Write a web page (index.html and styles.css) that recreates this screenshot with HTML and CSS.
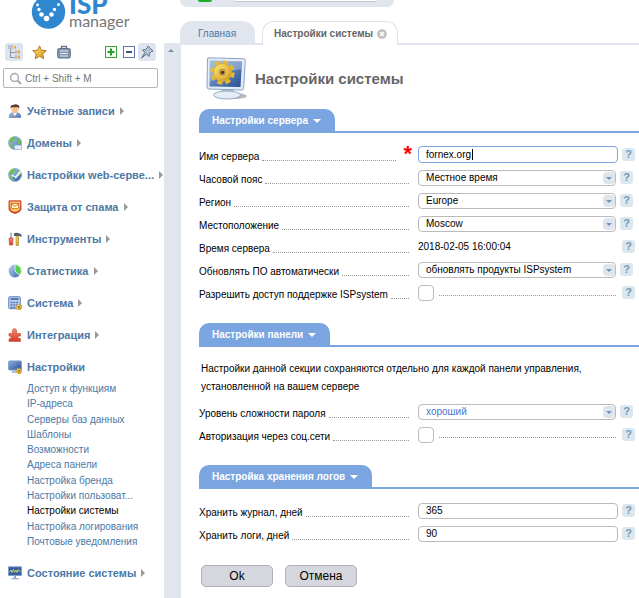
FILE: index.html
```
<!DOCTYPE html>
<html lang="ru">
<head>
  <meta charset="utf-8">
  <meta name="viewport" content="width=device-width, initial-scale=1.0">
  <title>ISPmanager</title>
  <link rel="stylesheet" href="styles.css">
</head>
<body>
  <!-- shared gradients and repeated shapes -->
  <svg class="defs" width="0" height="0" aria-hidden="true">
    <defs>
      <linearGradient id="blue" x1="0" y1="0" x2="1" y2="1">
        <stop offset="0" stop-color="#b9d3f3"/><stop offset="1" stop-color="#3d68b0"/>
      </linearGradient>
      <linearGradient id="screen" x1="0" y1="0" x2="1" y2="1">
        <stop offset="0" stop-color="#8db0dc"/><stop offset="1" stop-color="#284e92"/>
      </linearGradient>
      <linearGradient id="gold" x1="0" y1="0" x2="1" y2="1">
        <stop offset="0" stop-color="#fdec6a"/><stop offset="1" stop-color="#d08e1a"/>
      </linearGradient>
      <linearGradient id="red" x1="0" y1="0" x2="0" y2="1">
        <stop offset="0" stop-color="#f58e72"/><stop offset="1" stop-color="#d23a26"/>
      </linearGradient>
      <g id="globe">
        <circle cx="7" cy="7" r="6.5" fill="url(#blue)" stroke="#6a94c8" stroke-width=".6"/>
        <path d="M2 3Q5 0 8 1L7 3 5 4 5 6 3 7 1 6ZM9 2Q13 3 13 7L11 9 9 7 10 5ZM3 8L6 9 6 13Q3 12 2 9Z" fill="#6cc04e"/>
      </g>
      <g id="cog">
        <circle cx="11" cy="11" r="2.6" fill="url(#gold)" stroke="#c99a36" stroke-width="1.4" stroke-dasharray="1.2 .8"/>
        <circle cx="11" cy="11" r="1" fill="#8d713a"/>
      </g>
    </defs>
  </svg>

  <div class="app">
    <aside class="sidebar">
      <a class="logo" href="#" aria-label="ISPmanager">
        <svg width="140" height="34" viewBox="0 0 140 34">
          <circle cx="48.500" cy="12" r="16.700" fill="#2f87d0"/>
          <g fill="#fff">
            <circle cx="37.500" cy="5" r="1.400"/><circle cx="39" cy="9.500" r="1.700"/><circle cx="41.500" cy="14.500" r="2.300"/>
            <circle cx="46.500" cy="18.500" r="2.800"/><circle cx="51.500" cy="14.500" r="2.300"/><circle cx="54.500" cy="9.500" r="1.700"/><circle cx="58.500" cy="4.500" r="1.500"/>
          </g>
          <text class="logo-isp" x="69" y="14">ISP</text>
          <text class="logo-manager" x="69" y="27">manager</text>
        </svg>
      </a>

      <div class="toolbar">
        <button class="tool active" aria-label="Дерево">
          <svg width="14" height="14" viewBox="0 0 14 14"><path d="M3.500 4V12.500H8M3.500 7.500H8" stroke="#8795a5" fill="none"/><path d="M1 1H6M1 3H6M8 6H10M8 8H10M8 11H10M8 13H10" stroke="#9aa4ae"/><path d="M7 1H9V3.500H7ZM10.500 5.500H13V8.500H10.500ZM10.500 10.500H13V13.500H10.500Z" fill="#f3a72e"/></svg>
        </button>
        <button class="tool" aria-label="Избранное">
          <svg width="15" height="15" viewBox="0 0 14 14"><path d="M7 .8L8.900 4.900 13.300 5.300 10 8.300 11 12.800 7 10.500 3 12.800 4 8.300.7 5.300 5.100 4.900Z" fill="url(#gold)" stroke="#b5752c" stroke-width=".9"/></svg>
        </button>
        <button class="tool" aria-label="История">
          <svg width="14" height="14" viewBox="0 0 14 14"><path d="M4.500 3.500V1.500H9.500V3.500" fill="none" stroke="#66788f" stroke-width="1.300"/><rect x=".7" y="3.500" width="12.600" height="9.500" rx="1.500" fill="#8193aa" stroke="#5f7189"/><path d="M3 6H11M3 8.500H11M3 11H11" stroke="#e5ebf2"/></svg>
        </button>
        <span class="spacer"></span>
        <button class="tool" aria-label="Развернуть">
          <svg width="12" height="12" viewBox="0 0 12 12"><rect x=".5" y=".5" width="11" height="11" fill="#f2fff0" stroke="#36a53e"/><path d="M6 2.500V9.500M2.500 6H9.500" stroke="#2a9a31" stroke-width="2"/></svg>
        </button>
        <button class="tool" aria-label="Свернуть">
          <svg width="12" height="12" viewBox="0 0 12 12"><rect x=".5" y=".5" width="11" height="11" fill="#fff" stroke="#5f73a6"/><path d="M3 6H9" stroke="#3d528b" stroke-width="2"/></svg>
        </button>
        <button class="tool active" aria-label="Закрепить">
          <svg width="14" height="14" viewBox="0 0 14 14"><path d="M8 1L13 6 11.500 6.500 9.500 8.500 9 11.500 6.500 9 1.500 13 5 7.500 2.500 5 5.500 4.500 7.500 2.500Z" fill="#b3c2d2" stroke="#5d7288"/></svg>
        </button>
      </div>

      <div class="search">
        <svg width="13" height="13" viewBox="0 0 13 13"><circle cx="5.500" cy="5.500" r="4" fill="none" stroke="#aaa" stroke-width="1.400"/><path d="M8.500 8.500L12 12" stroke="#aaa" stroke-width="2"/></svg>
        <input type="text" placeholder="Ctrl + Shift + M" aria-label="Поиск">
      </div>

      <nav class="menu">
        <a class="menu-item arrow" href="#">
          <svg class="icon" viewBox="0 0 14 14"><path d="M1 13.500Q1 9 5 8.500H9Q13 9 13 13.500Z" fill="url(#blue)" stroke="#5c84bc" stroke-width=".6"/><path d="M5 8.500L7 13 9 8.500Z" fill="#fff"/><path d="M7 10L6.300 13.500H7.700Z" fill="#d65140"/><path d="M3.500 3Q7 1 10.500 3V6Q10 9 7 9.300 4 9 3.500 6Z" fill="#f6c08d"/><path d="M2.800 4.500Q2 .5 5 1 8-.5 10 1 12 1.500 11 4.500L9.800 3Q7 3.500 4.200 3Z" fill="#5d3d30"/></svg>
          Учётные записи
        </a>
        <a class="menu-item arrow" href="#">
          <svg class="icon" viewBox="0 0 14 14"><use href="#globe"/><rect x="6.500" y="9" width="7.200" height="4.700" rx="1" fill="#e3effd" stroke="#84a9d6" stroke-width=".8"/></svg>
          Домены
        </a>
        <a class="menu-item arrow" href="#">
          <svg class="icon" viewBox="0 0 14 14"><use href="#globe"/><path d="M4 7L7 10 12.500 3.500" fill="none" stroke="#e9f1fa" stroke-width="2"/><path d="M5 9L8 12 13 7" fill="none" stroke="#3972b6" stroke-width="1.400"/></svg>
          Настройки web-серве...
        </a>
        <a class="menu-item arrow" href="#">
          <svg class="icon" viewBox="0 0 14 14"><path d="M1 .8H13V9.500Q12.500 12 7 13.500 1.500 12 1 9.500Z" fill="url(#red)" stroke="#b93622" stroke-width=".8"/><path d="M2.300 2H11.700V9Q11 11 7 12 3 11 2.300 9Z" fill="#fbcf54"/><rect x="3.500" y="3.500" width="7" height="5" fill="#fff5c4" stroke="#d05b2f" stroke-width=".7"/><path d="M3.500 3.700L7 6.500 10.500 3.700" fill="none" stroke="#d05b2f" stroke-width=".8"/></svg>
          Защита от спама
        </a>
        <a class="menu-item arrow" href="#">
          <svg class="icon" viewBox="0 0 14 14"><path d="M3 .8V6" stroke="#9aa7b5" stroke-width="1.600"/><path d="M1 6H5L4.700 13H1.500Z" fill="url(#red)" stroke="#bd3e2b" stroke-width=".6"/><path d="M6 1.200Q10 0 13.500 2.500V5L11.500 4H6Z" fill="#53616f"/><path d="M8 4.200H10.500V13.500H8Z" fill="url(#gold)" stroke="#96772b" stroke-width=".5"/></svg>
          Инструменты
        </a>
        <a class="menu-item arrow" href="#">
          <svg class="icon" viewBox="0 0 14 14"><circle cx="7" cy="7" r="6.400" fill="url(#blue)"/><path d="M7 7V.5A6.500 6.500 0 0 1 11.500 11.500Z" fill="#55cf47" stroke="#eaffea" stroke-width=".8"/></svg>
          Статистика
        </a>
        <a class="menu-item arrow" href="#">
          <svg class="icon" viewBox="0 0 14 14"><rect x=".7" y=".7" width="11.600" height="12" rx="1" fill="#bdd0ee" stroke="#6788bd"/><path d="M2.500 3H10.500" stroke="#5775ae" stroke-width="2"/><path d="M2.500 6.500H10.500M2.500 9H9M2.500 11.500H8" stroke="#5775ae" stroke-width="1.500" stroke-dasharray="2 .8"/><use href="#cog"/></svg>
          Система
        </a>
        <a class="menu-item arrow" href="#">
          <svg class="icon" viewBox="0 0 14 14"><path d="M1 5.500H5.200Q4 4.500 4.200 3 4.700.6 6.500.6T8.800 3Q9 4.500 8 5.500H12.500V8Q10 7.800 10 9.300T12.500 10.700V13.400H1V11Q3 10.700 3 9.300T1 8Z" fill="url(#red)" stroke="#cb4430" stroke-width=".6"/></svg>
          Интеграция
        </a>
        <a class="menu-item" href="#">
          <svg class="icon" viewBox="0 0 14 14"><rect x=".7" y="1" width="12.600" height="9" rx="1" fill="url(#screen)" stroke="#7094c6"/><path d="M5 10H9L10 13H3Z" fill="#a9bfdc"/><use href="#cog"/></svg>
          Настройки
        </a>
        <ul class="submenu">
          <li><a href="#">Доступ к функциям</a></li>
          <li><a href="#">IP-адреса</a></li>
          <li><a href="#">Серверы баз данных</a></li>
          <li><a href="#">Шаблоны</a></li>
          <li><a href="#">Возможности</a></li>
          <li><a href="#">Адреса панели</a></li>
          <li><a href="#">Настройка бренда</a></li>
          <li><a href="#">Настройки пользоват...</a></li>
          <li><a class="current" href="#">Настройки системы</a></li>
          <li><a href="#">Настройка логирования</a></li>
          <li><a href="#">Почтовые уведомления</a></li>
        </ul>
        <a class="menu-item arrow" href="#">
          <svg class="icon" viewBox="0 0 14 14"><rect x=".5" y=".8" width="13" height="8.700" fill="#365e9f" stroke="#7d9bc8" stroke-width=".8"/><path d="M1.500 6L3 4 4 6.500 5.500 3.500 6.500 6.500 8 4 9 6.500 10.500 3.500 12.500 6" fill="none" stroke="#c6da75" stroke-width=".9"/><path d="M6 10H8V12H10.500V13.300H3.500V12H6Z" fill="#91a8cc"/></svg>
          Состояние системы
        </a>
      </nav>
    </aside>

    <div class="scroll-strip"></div>

    <main class="main">
      <div class="topbar">
        <span class="topbar-dot"></span>
        <span class="topbar-field"></span>
      </div>

      <div class="tabs">
        <a class="tab" href="#">Главная</a>
        <div class="tab tab-active">
          Настройки системы
          <button class="tab-close" aria-label="Закрыть">
            <svg width="10" height="10" viewBox="0 0 10 10"><circle cx="5" cy="5" r="4.800" fill="#bdbdbd"/><path d="M3 3L7 7M7 3L3 7" stroke="#fff" stroke-width="1.500"/></svg>
          </button>
        </div>
      </div>

      <div class="content">
        <div class="page-title">
          <svg width="42" height="44" viewBox="0 0 42 44">
            <ellipse cx="29" cy="39" rx="12" ry="3" fill="#8a8a8a" opacity=".6"/>
            <path d="M16 31H27L28 37H15Z" fill="#a9bbd2"/>
            <ellipse cx="21" cy="38" rx="13.500" ry="4" fill="#e4ecf6" stroke="#97abc5"/>
            <path d="M1.500 2Q1.500 .8 3 .8L38 1.800Q39.500 2 39.300 3.500L37.500 31.500Q37.300 33 36 33L3 32Q1 32 1 30Z" fill="#e4edf7" stroke="#8aa2c4"/>
            <path d="M3.800 3.500L36 4.500 34.500 30 3.500 29.500Z" fill="url(#screen)"/>
            <path d="M3.800 3.500L36 4.500 35.500 12Q17 14 3.500 25Z" fill="#c8daf0" opacity=".4"/>
            <circle cx="16.500" cy="15.500" r="10" fill="none" stroke="#e3bb34" stroke-width="4.500" stroke-dasharray="4.854 3"/>
            <circle cx="16.500" cy="15.500" r="9" fill="url(#gold)" stroke="#d7a52c" stroke-width=".7"/>
            <circle cx="16.500" cy="15.500" r="4.500" fill="#c69b3a" stroke="#f7df78"/>
            <circle cx="16.500" cy="15.500" r="1.700" fill="#4f3520"/>
          </svg>
          <h1>Настройки системы</h1>
        </div>

        <form class="form">
          <section class="section">
            <div class="section-head"><button type="button" class="section-tab">Настройки сервера</button></div>
            <div class="row">
              <label class="label required" for="host">Имя сервера</label>
              <input class="field focused" id="host" type="text" value="fornex.org">
              <button type="button" class="help">?</button>
            </div>
            <div class="row row-select">
              <label class="label" for="tz">Часовой пояс</label>
              <div class="select"><select class="field" id="tz"><option>Местное время</option></select></div>
              <button type="button" class="help">?</button>
            </div>
            <div class="row row-select">
              <label class="label" for="region">Регион</label>
              <div class="select"><select class="field" id="region"><option>Europe</option></select></div>
              <button type="button" class="help">?</button>
            </div>
            <div class="row row-select">
              <label class="label" for="place">Местоположение</label>
              <div class="select"><select class="field" id="place"><option>Moscow</option></select></div>
              <button type="button" class="help">?</button>
            </div>
            <div class="row">
              <span class="label">Время сервера</span>
              <span class="value">2018-02-05 16:00:04</span>
              <button type="button" class="help">?</button>
            </div>
            <div class="row row-select">
              <label class="label" for="update">Обновлять ПО автоматически</label>
              <div class="select"><select class="field" id="update"><option>обновлять продукты ISPsystem</option></select></div>
              <button type="button" class="help">?</button>
            </div>
            <div class="row">
              <label class="label" for="support">Разрешить доступ поддержке ISPsystem</label>
              <div class="check"><input type="checkbox" id="support"></div>
              <button type="button" class="help">?</button>
            </div>
          </section>

          <section class="section">
            <div class="section-head"><button type="button" class="section-tab">Настройки панели</button></div>
            <p class="note">Настройки данной секции сохраняются отдельно для каждой панели управления, установленной на вашем сервере</p>
            <div class="row row-select">
              <label class="label" for="strength">Уровень сложности пароля</label>
              <div class="select"><select class="field changed" id="strength"><option>хороший</option></select></div>
              <button type="button" class="help">?</button>
            </div>
            <div class="row">
              <label class="label" for="social">Авторизация через соц.сети</label>
              <div class="check"><input type="checkbox" id="social"></div>
              <button type="button" class="help">?</button>
            </div>
          </section>

          <section class="section">
            <div class="section-head"><button type="button" class="section-tab">Настройка хранения логов</button></div>
            <div class="row">
              <label class="label" for="journal">Хранить журнал, дней</label>
              <input class="field" id="journal" type="text" value="365">
              <button type="button" class="help">?</button>
            </div>
            <div class="row">
              <label class="label" for="logs">Хранить логи, дней</label>
              <input class="field" id="logs" type="text" value="90">
              <button type="button" class="help">?</button>
            </div>
          </section>

          <div class="buttons">
            <button type="button" class="btn">Ok</button>
            <button type="button" class="btn">Отмена</button>
          </div>
        </form>
      </div>
    </main>
  </div>
</body>
</html>
```

FILE: styles.css
```
* {
  box-sizing: border-box;
}
body {
  margin: 0;
  font-family: "Liberation Sans", Arial, sans-serif;
  font-size: 10px;
  color: #000;
  background: #fff;
}
button, input, select {
  font-family: inherit;
  font-size: inherit;
  margin: 0;
}
button {
  border: none;
  padding: 0;
  background: none;
  cursor: pointer;
}
a {
  color: #4c78a5;
  text-decoration: none;
}
.defs {
  position: absolute;
}
.app {
  display: flex;
  min-height: 100vh;
}

/* Sidebar */
.sidebar {
  flex: 0 0 164px;
  width: 164px;
}
.logo {
  display: block;
  height: 42px;
}
.logo svg {
  display: block;
}
.logo-isp {
  font-family: Lato, sans-serif;
  font-weight: 900;
  font-size: 26px;
  fill: #2f87d0;
}
.logo-manager {
  font-family: Lato, sans-serif;
  font-size: 16px;
  fill: #777;
}
.toolbar {
  display: flex;
  align-items: center;
  gap: 7px;
  height: 20px;
  padding: 0 8px 0 5px;
}
.tool {
  display: flex;
  align-items: center;
  justify-content: center;
  height: 18px;
  min-width: 18px;
  border-radius: 3px;
}
.tool.active {
  background: #dde4ee;
}
.spacer {
  flex: 1;
}
.toolbar .spacer ~ .tool {
  margin-left: -7px;
}
.search {
  display: flex;
  align-items: center;
  gap: 3px;
  height: 20px;
  margin: 6px 6px 7px 3px;
  padding: 0 5px;
  border: 1px solid #b5b5b5;
  border-radius: 2px;
}
.search svg {
  flex: none;
}
.search input {
  flex: 1;
  min-width: 0;
  padding: 0;
  border: none;
  outline: none;
  background: none;
}
.search input::placeholder {
  color: #757575;
}
.menu {
  padding-left: 8px;
}
.menu-item {
  display: flex;
  align-items: center;
  height: 32px;
  font-size: 11px;
  font-weight: bold;
  white-space: nowrap;
}
.icon {
  flex: none;
  width: 14px;
  height: 14px;
  margin-right: 5px;
}
.arrow::after {
  content: "";
  flex: none;
  margin-left: 5px;
  border: 4px solid transparent;
  border-left-color: #999;
  border-right: none;
}
.submenu {
  display: flex;
  flex-direction: column;
  justify-content: space-between;
  min-height: 168px;
  margin: -2px 0 8px;
  padding: 0 0 0 19px;
  list-style: none;
}
.submenu li {
  line-height: 15px;
}
.submenu .current {
  color: #000;
}
.scroll-strip {
  flex: 0 0 16px;
  margin-top: 43px;
  padding: 6px 4px;
  background: #e0e5ee;
}
.scroll-strip::before {
  content: "";
  display: block;
  width: 0;
  border: 3px solid transparent;
  border-bottom-color: #7d8fa8;
  border-top: none;
}

/* Main area */
.main {
  flex: 1;
  min-width: 0;
}
.topbar {
  display: flex;
  width: 214px;
  height: 7px;
  margin-bottom: 14px;
  padding: 0 18px;
  gap: 23px;
  background: #e0e5ee;
  border-radius: 0 0 14px 14px;
}
.topbar-dot {
  width: 14px;
  height: 2px;
  background: #1fae26;
  border-radius: 0 0 7px 7px;
}
.topbar-field {
  flex: 1;
  height: 2px;
  background: #fff;
  border-bottom: 1px solid #c2c6cc;
}
.tabs {
  display: flex;
  gap: 7px;
}
.tab {
  display: flex;
  align-items: center;
  gap: 4px;
  height: 24px;
  padding: 0 19px 0 18px;
  background: #e0e5ee;
  border-radius: 12px 12px 0 0;
}
.tab-active {
  position: relative;
  padding: 0 10px 0 11px;
  color: #666;
  font-weight: bold;
  background: #fff;
  border: 1px solid #dbe2ec;
  border-bottom: none;
}
.tab-close {
  display: flex;
}
.content {
  margin-top: -2px;
  padding: 1px 4px 11px 18px;
  border-top: 2px solid #e0e5ee;
  border-left: 1px solid #e0e5ee;
}
.page-title {
  display: flex;
  align-items: center;
  gap: 7px;
  padding: 11px 0 8px 7px;
}
.page-title h1 {
  margin: 0;
  font-size: 15px;
  line-height: 18px;
  color: #666;
}
.section {
  margin-bottom: 19px;
}
.section-head {
  display: flex;
  margin: 0 -4px 10px 0;
  border-bottom: 2px solid #7aa5e0;
}
.section-tab {
  display: flex;
  align-items: center;
  gap: 5px;
  height: 22px;
  padding: 0 14px 0 13px;
  color: #fff;
  font-weight: bold;
  background: #7aa5e0;
  border-radius: 10px 10px 0 0;
}
.section-tab::after {
  content: "";
  margin-top: 2px;
  border: 4px solid transparent;
  border-top-color: #fff;
  border-bottom: none;
}
.note {
  margin: 13px 30px 4px 2px;
  line-height: 18px;
}
.row {
  display: flex;
  align-items: center;
  gap: 4px;
  height: 23px;
}
.row-select {
  padding-right: 2px;
}
.label {
  display: flex;
  align-items: center;
  flex: 0 0 210px;
  margin-right: 5px;
  padding-top: 4px;
  line-height: 13px;
  white-space: nowrap;
}
.label::after {
  content: "";
  flex: 1;
  height: 8px;
  margin-left: 3px;
  border-bottom: 1px dotted #999;
}
.required {
  position: relative;
  padding-right: 13px;
}
.required::before {
  content: "*";
  position: absolute;
  right: -3px;
  top: -3px;
  font-size: 22px;
  font-weight: bold;
  line-height: 22px;
  color: #f00;
}
.field {
  flex: 1;
  min-width: 0;
  width: 100%;
  height: 16px;
  padding: 0 7px 1px;
  color: #000;
  border: 1px solid #bbb;
  border-radius: 4px;
  background: #fff;
  outline: none;
}
/* focused text box with its cursor after the value */
.focused {
  height: 17px;
  border-color: #7aa5e0;
  background: linear-gradient(#000, #000) 53px 2px / 1px 11px no-repeat;
}
.select {
  position: relative;
  display: flex;
  flex: 1;
}
select.field {
  appearance: none;
}
.select::before {
  content: "";
  position: absolute;
  right: 1px;
  top: 2px;
  width: 12px;
  height: 12px;
  border-radius: 4px;
  background: #dfe5ec;
  pointer-events: none;
}
.select::after {
  content: "";
  position: absolute;
  right: 4px;
  top: 7px;
  border: 3px solid transparent;
  border-top-color: #7593b5;
  border-bottom: none;
  pointer-events: none;
}
.field.changed {
  color: #4577cc;
}
.value {
  flex: 1;
}
.check {
  display: flex;
  align-items: center;
  flex: 1;
  gap: 5px;
}
.check input {
  appearance: none;
  width: 16px;
  height: 16px;
  border: 1px solid #bbb;
  border-radius: 4px;
  background: #fff;
}
.check::after {
  content: "";
  flex: 1;
  height: 6px;
  margin-right: 2px;
  border-bottom: 1px dotted #999;
}
.help {
  flex: none;
  width: 13px;
  height: 13px;
  line-height: 13px;
  font-size: 11px;
  font-weight: bold;
  color: #6f9cba;
  background: #dce7ee;
  border-radius: 3px;
}
.buttons {
  display: flex;
  gap: 12px;
  padding: 1px 2px;
}
.btn {
  min-width: 72px;
  height: 22px;
  padding: 0 13px;
  font-size: 12px;
  color: #000;
  background: #d4d8de;
  border: 1px solid #adb2b9;
  border-radius: 5px;
}
```
